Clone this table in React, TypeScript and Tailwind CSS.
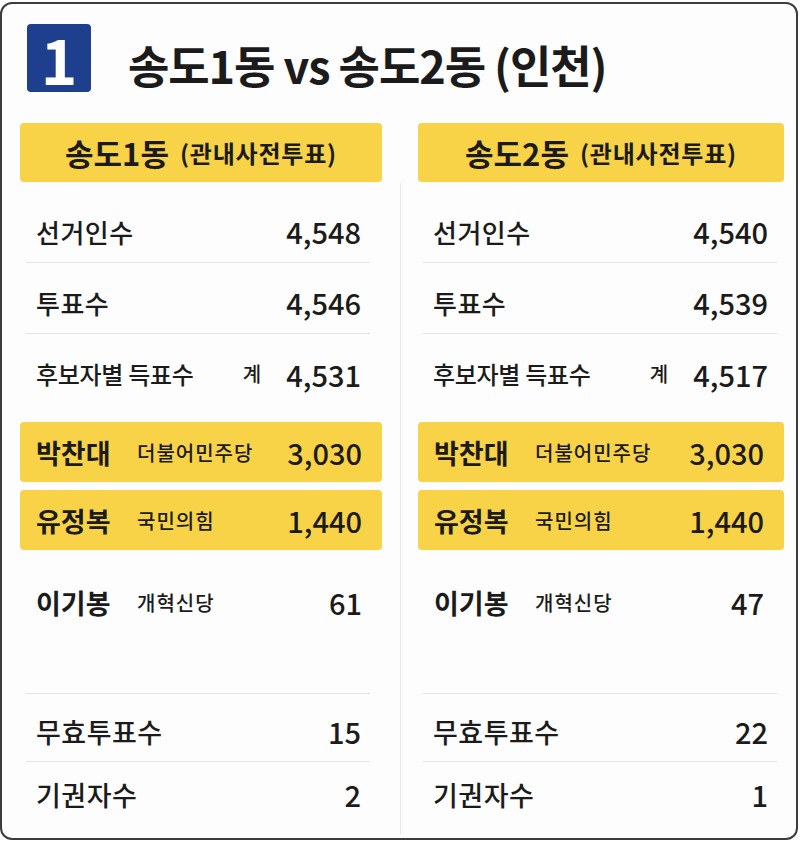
import React from "react";

// 송도1동 vs 송도2동 관내사전투표 비교 카드

type Candidate = { name: string; party: string; votes: string; highlight?: boolean };

type Column = {
    title: string;
    electors: string;
    turnout: string;
    total: string;
    candidates: Candidate[];
    invalid: string;
    abstain: string;
};

const LEFT: Column = {
    title: "송도1동",
    electors: "4,548",
    turnout: "4,546",
    total: "4,531",
    candidates: [
        { name: "박찬대", party: "더불어민주당", votes: "3,030", highlight: true },
        { name: "유정복", party: "국민의힘", votes: "1,440", highlight: true },
        { name: "이기봉", party: "개혁신당", votes: "61" },
    ],
    invalid: "15",
    abstain: "2",
};

const RIGHT: Column = {
    title: "송도2동",
    electors: "4,540",
    turnout: "4,539",
    total: "4,517",
    candidates: [
        { name: "박찬대", party: "더불어민주당", votes: "3,030", highlight: true },
        { name: "유정복", party: "국민의힘", votes: "1,440", highlight: true },
        { name: "이기봉", party: "개혁신당", votes: "47" },
    ],
    invalid: "22",
    abstain: "1",
};

function StatRow({ label, value, border, extra, small }: { label: string; value: string; border?: boolean; extra?: string; small?: boolean }) {
    return (
        <div className={`flex items-center pl-[10px] pr-[9px] pt-[9px] h-[71px] ${border ? "border-b border-[#e4e4e4]" : ""}`}>
            <span className={`${small ? "text-[24px] tracking-[-0.3px]" : "text-[26px] tracking-[0.5px]"} font-medium leading-none`}>{label}</span>
            {extra && <span className="ml-auto mr-[25px] text-[20px] font-medium leading-none">{extra}</span>}
            <span className={`${extra ? "" : "ml-auto"} text-[29px] font-medium leading-none`}>{value}</span>
        </div>
    );
}

function CandidateRow({ c }: { c: Candidate }) {
    return (
        <div className={`flex items-center pl-[16px] pr-[20px] ${c.highlight ? "h-[60px] rounded-[4px] bg-[#f8d247]" : "h-[88px]"}`}>
            <span className="w-[101px] text-[27px] font-bold leading-none">{c.name}</span>
            <span className="pt-[2px] text-[20px] font-medium leading-none tracking-[1px]">{c.party}</span>
            <span className="ml-auto text-[29px] font-medium leading-none">{c.votes}</span>
        </div>
    );
}

function ResultColumn({ col, widthCls, insetCls }: { col: Column; widthCls: string; insetCls: string }) {
    return (
        <div className={`${widthCls} flex flex-col`}>
            <div className="h-[59px] flex items-center justify-center gap-[11px] rounded-[4px] bg-[#f8d247]">
                <span className="text-[31px] font-bold leading-none">{col.title}</span>
                <span className="text-[24px] font-semibold leading-none tracking-[0.8px]">(관내사전투표)</span>
            </div>
            <div className={`mt-[10px] ${insetCls}`}>
                <StatRow label="선거인수" value={col.electors} border />
                <StatRow label="투표수" value={col.turnout} border />
                <StatRow label="후보자별 득표수" value={col.total} extra="계" small />
            </div>
            <div className="mt-[17px] flex flex-col gap-[8px]">
                {col.candidates.map((c) => (
                    <CandidateRow key={c.name} c={c} />
                ))}
            </div>
            <div className={`mt-[47px] ${insetCls}`}>
                <div className="flex items-center pl-[10px] pr-[9px] pt-[8px] h-[68px] border-t border-[#e4e4e4]">
                    <span className="text-[27px] font-medium leading-none tracking-[0.5px]">무효투표수</span>
                    <span className="ml-auto text-[29px] font-medium leading-none">{col.invalid}</span>
                </div>
                <div className="flex items-center pl-[10px] pr-[9px] h-[66px] border-t border-[#e4e4e4]">
                    <span className="text-[27px] font-medium leading-none tracking-[0.5px]">기권자수</span>
                    <span className="ml-auto text-[29px] font-medium leading-none">{col.abstain}</span>
                </div>
            </div>
        </div>
    );
}

export default function App() {
    return (
        <div className="w-[800px] h-[842px] bg-white pt-[2px] text-[#1b1b1b] font-['Noto_Sans_CJK_KR',sans-serif]">
            <div className="w-[798px] h-[838px] rounded-[12px] border-2 border-[#3c3c3c] bg-[#fdfdfd] overflow-hidden">
                <div className="flex items-start pl-[25px] pt-[20px]">
                    <div className="w-[64px] h-[68px] rounded-[4px] bg-[#1d3f8e] flex items-center justify-center">
                        <span className="text-[62px] font-bold leading-none text-white">1</span>
                    </div>
                    <h1 className="ml-[37px] mt-[18px] text-[45px] font-bold leading-none tracking-[-1.1px]">
                        송도1동 vs 송도2동 (인천)
                    </h1>
                </div>
                <div className="mt-[31px] pl-[18px] flex items-stretch h-[711px]">
                    <ResultColumn col={LEFT} widthCls="w-[362px]" insetCls="ml-[6px] mr-[12px]" />
                    <div className="w-[36px] flex justify-center pt-[60px]">
                        <div className="w-px bg-[#e8e8e8]" />
                    </div>
                    <ResultColumn col={RIGHT} widthCls="w-[366px]" insetCls="ml-[5px] mr-[7px]" />
                </div>
            </div>
        </div>
    );
}
